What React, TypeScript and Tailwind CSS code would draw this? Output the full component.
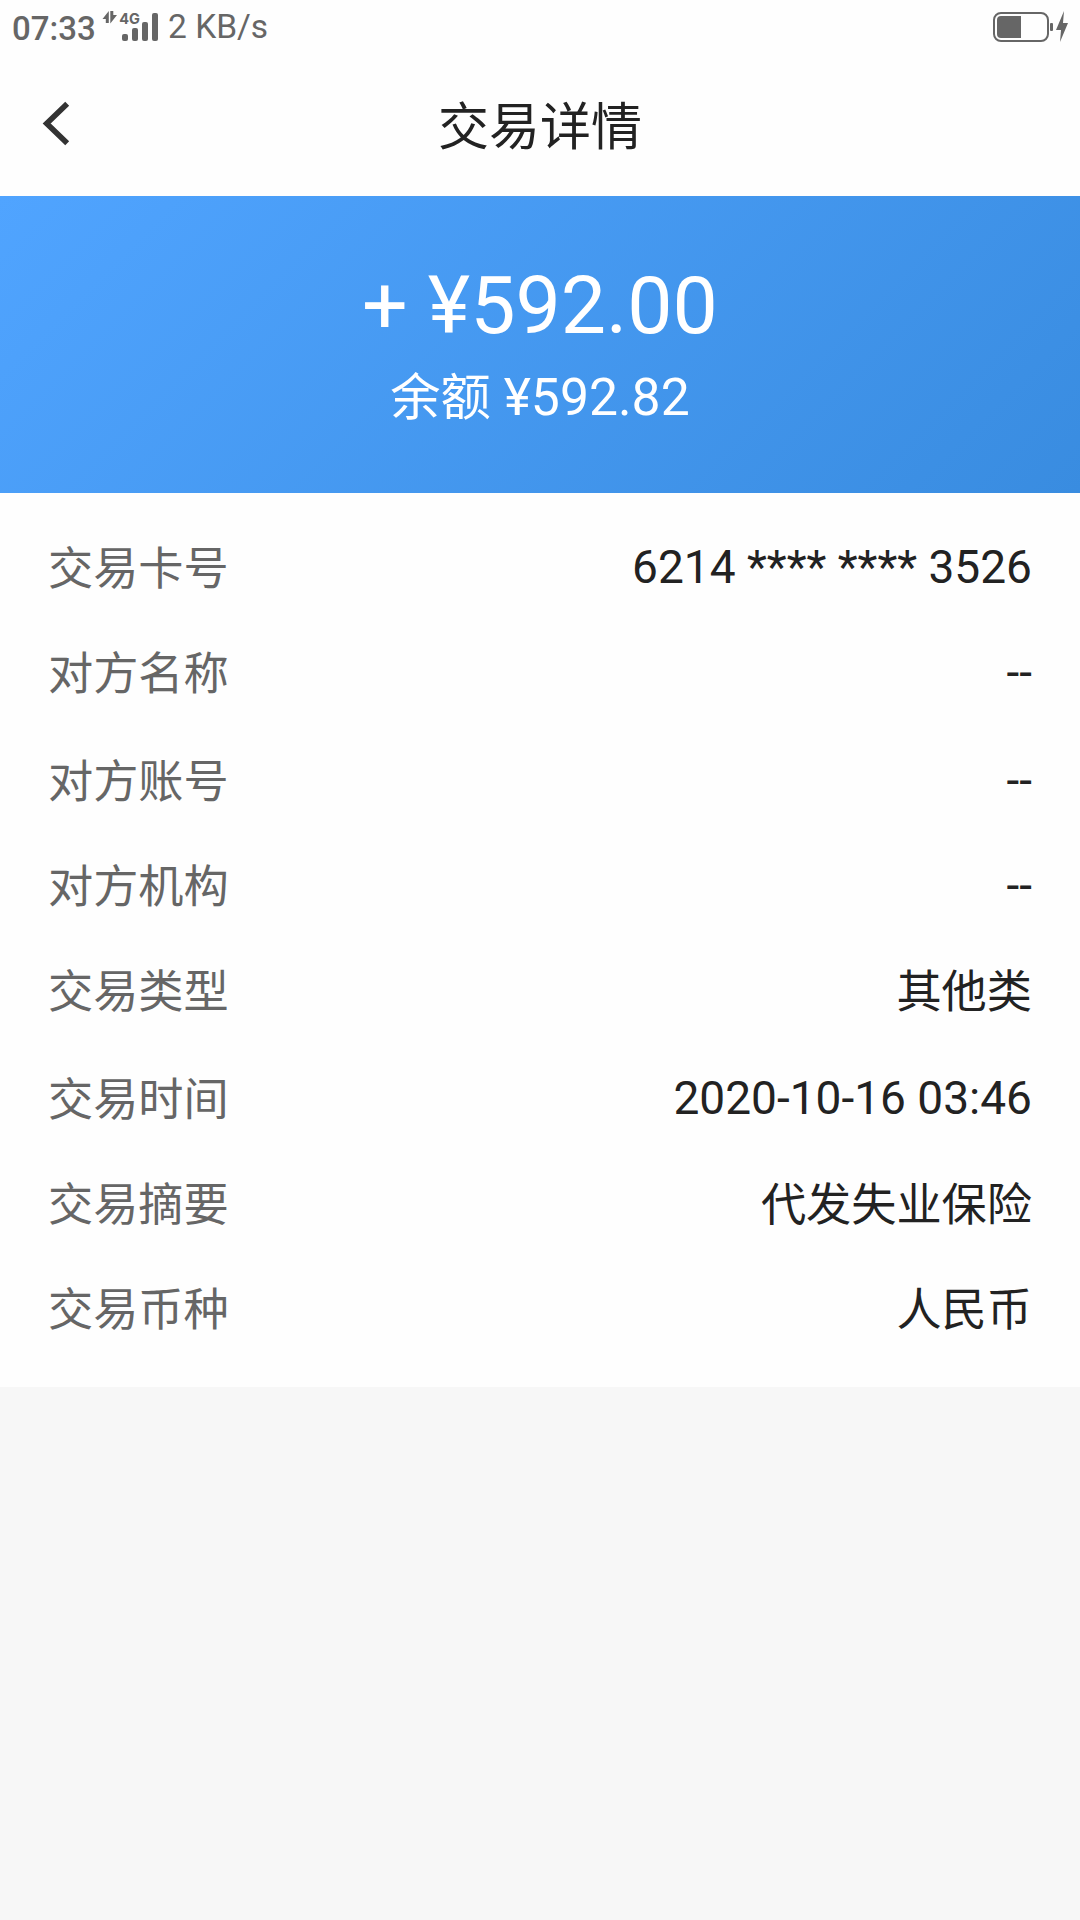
import React from "react";

type DetailRow = {
  label: string;
  value: string;
  height: string;
  chinese?: boolean;
};

const rows: DetailRow[] = [
  { label: "交易卡号", value: "6214 **** **** 3526", height: "h-[105px]" },
  { label: "对方名称", value: "--", height: "h-[108px]" },
  { label: "对方账号", value: "--", height: "h-[105px]" },
  { label: "对方机构", value: "--", height: "h-[105px]" },
  { label: "交易类型", value: "其他类", height: "h-[108px]", chinese: true },
  { label: "交易时间", value: "2020-10-16 03:46", height: "h-[105px]" },
  { label: "交易摘要", value: "代发失业保险", height: "h-[105px]", chinese: true },
  { label: "交易币种", value: "人民币", height: "h-[105px]", chinese: true },
];

const SignalIcon: React.FC = () => (
  <svg width="58" height="36" viewBox="102 8 58 36" fill="#666666" className="ml-[7px] mt-2">
    <path d="M102.5 19L108.8 11V23H105.8V19Z" />
    <path d="M110.3 11H113.3V15H117L110.3 23.5Z" />
    <text x="119.2" y="23.5" fontSize="14.5" fontWeight="700" fontFamily="Inter, sans-serif">
      4G
    </text>
    <rect x="122" y="34" width="6" height="7" rx="2" />
    <rect x="132" y="28" width="6" height="13" rx="2" />
    <rect x="142" y="22" width="6" height="19" rx="2" />
    <rect x="152" y="13" width="6" height="28" rx="2" />
  </svg>
);

const BatteryIcon: React.FC = () => (
  <svg width="78" height="36" viewBox="992 8 78 36" fill="#666666" className="mt-2">
    <rect x="994" y="13" width="54" height="28" rx="7" fill="none" stroke="#666666" strokeWidth="2" />
    <path d="M1021 16V38H1001Q997 38 997 34V20Q997 16 1001 16Z" />
    <rect x="1050" y="23" width="3" height="8" rx="1" />
    <path d="M1064 11L1056 30H1061L1060 42L1068 23H1063Z" />
  </svg>
);

const StatusBar: React.FC = () => (
  <div className="flex h-[54px] items-start justify-between pl-3 pr-[10px] leading-[38px] text-[#666666]">
    <div className="flex items-start">
      <span className="mt-[10px] w-[83px] whitespace-nowrap text-[33px] font-medium">07:33</span>
      <SignalIcon />
      <span className="ml-[8px] mt-[8px] whitespace-nowrap text-[33.5px]">2 KB/s</span>
    </div>
    <BatteryIcon />
  </div>
);

const App: React.FC = () => {
  return (
    <div className="h-[1920px] w-[1080px] overflow-hidden bg-[#f7f7f7] font-[Roboto,'Noto_Sans_CJK_SC',sans-serif] text-[#222222]">
      <header className="h-[196px] bg-[#fefefe]">
        <StatusBar />
        <div className="grid h-[142px] grid-cols-[120px_1fr_120px]">
          <button className="flex items-start pl-[42px] pt-[47px]" aria-label="返回">
            <svg width="28" height="45" viewBox="0 0 28 45" className="block">
              <path d="M25.2 2.7L4.7 22.5L25.2 42.3" fill="none" stroke="#333333" strokeWidth="5.6" />
            </svg>
          </button>
          <h1 className="pt-[36px] text-center text-[51px] leading-[76px]">交易详情</h1>
        </div>
      </header>

      <section className="h-[297px] bg-[linear-gradient(135deg,#50a4ff,#398ce0)] text-center text-white">
        <p className="pt-[62px] text-[80.6px] leading-[95px]">+ ¥592.00</p>
        <p className="mt-[7px] text-[51.7px] leading-[76px]">
          <span className="text-[50.3px]">余额</span> ¥592.82
        </p>
      </section>

      <section className="h-[894px] bg-[#fefefe] px-12 pt-[41px]">
        {rows.map((row) => (
          <div key={row.label} className={`flex items-start justify-between leading-[66px] ${row.height}`}>
            <span className="pt-[3px] text-[45.2px] text-[#666666]">{row.label}</span>
            <span className={row.chinese ? "pt-[3px] text-[45.2px]" : "text-[46.05px]"}>{row.value}</span>
          </div>
        ))}
      </section>
    </div>
  );
};

export default App;
